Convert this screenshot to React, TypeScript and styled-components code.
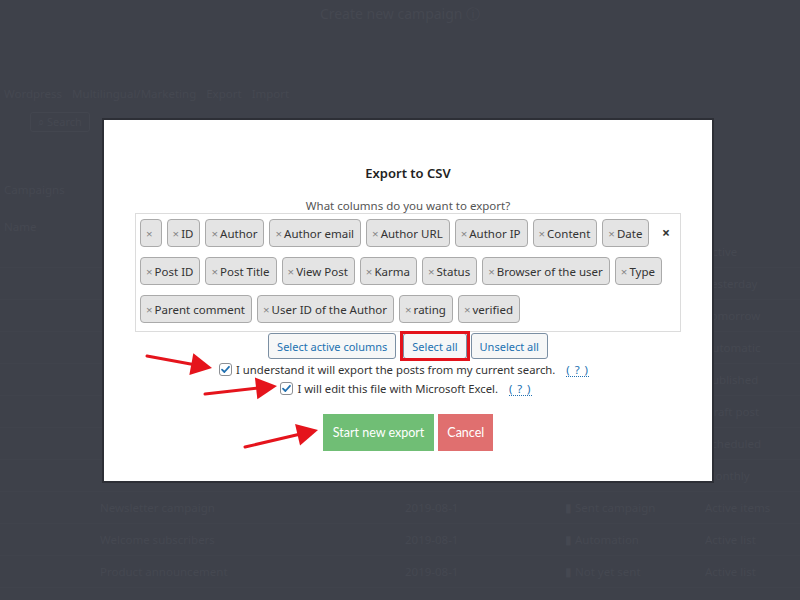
import React from 'react';
import styled, { createGlobalStyle } from 'styled-components';

const Global = createGlobalStyle`
  html, body { margin: 0; padding: 0; background: #3e414a; }
  body { width: 800px; height: 600px; overflow: hidden; font-family: "Noto Sans", "Open Sans", sans-serif; }
  * { box-sizing: border-box; }
`;

const Page = styled.div`
  position: relative;
  width: 800px;
  height: 600px;
  background: #3e414a;
  overflow: hidden;
`;

/* ---------- faint page behind the overlay ---------- */
const Backdrop = styled.div`
  display: flex;
  flex-direction: column;
  color: #454851;
  font-size: 11.5px;
`;

const BgTitle = styled.div`
  height: 86px;
  padding-top: 4px;
  text-align: center;
  font-size: 14px;
`;

const BgCrumb = styled.div`
  height: 26px;
  padding-left: 4px;
  display: flex;
  gap: 10px;
`;

const BgSearch = styled.div`
  margin-left: 30px;
  width: 60px;
  height: 20px;
  border: 1px solid #43464f;
  border-radius: 3px;
  font-size: 11px;
  line-height: 18px;
  text-align: center;
`;

const BgSide = styled.div`
  padding: 50px 0 0 4px;
  height: 104px;
  display: flex;
  flex-direction: column;
  gap: 22px;
`;

const BgRow = styled.div`
  height: 32px;
  display: grid;
  grid-template-columns: 100px 305px 160px 140px 1fr;
  align-items: center;
  border-bottom: 1px solid #40434c;
`;

const BgCell = styled.div`
  white-space: nowrap;
  overflow: hidden;
  display: flex;
  align-items: center;
  gap: 8px;
`;

/* ---------- modal ---------- */
const Modal = styled.div`
  position: absolute;
  left: 104px;
  top: 120px;
  width: 608px;
  height: 361px;
  background: #ffffff;
  box-shadow: 0 0 0 2px #2d2f36;
  display: flex;
  flex-direction: column;
  align-items: center;
  padding-top: 44px;
  color: #333;
`;

const Title = styled.h2`
  margin: 0 0 17px;
  font-size: 13px;
  line-height: 18px;
  font-weight: 600;
  color: #222;
`;

const Subtitle = styled.div`
  font-size: 11.5px;
  line-height: 14px;
  color: #555;
`;

const TagBox = styled.div`
  width: 546px;
  height: 119px;
  border: 1px solid #dcdcdc;
  display: flex;
  padding: 5px 0 8px 4px;
`;

const TagList = styled.div`
  flex: 1;
  display: flex;
  flex-wrap: wrap;
  align-content: flex-start;
  column-gap: 5px;
  row-gap: 10px;
`;

const Tag = styled.div`
  height: 28px;
  display: flex;
  align-items: center;
  padding: 0 6px 0 5px;
  background: #e4e4e4;
  border: 1px solid #aaaaaa;
  border-radius: 4px;
  font-size: 11.5px;
  color: #333;
  white-space: nowrap;
`;

const TagX = styled.span`
  color: #888;
  font-size: 11.5px;
  margin-right: 2px;
`;

const ClearAll = styled.div`
  width: 18px;
  padding-top: 4px;
  font-size: 14px;
  font-weight: 700;
  color: #333;
  text-align: left;
`;

const ButtonRow = styled.div`
  display: flex;
  gap: 4px;
  margin-top: 1px;
`;

const SmallButton = styled.button<{ $highlight?: boolean }>`
  position: relative;
  height: 26px;
  padding: 0 8px;
  margin-left: ${(p) => (p.$highlight ? 3 : 0)}px;
  background: #f6f7f7;
  border: 1px solid #7b8fa3;
  border-radius: 3px;
  color: #2271b1;
  font-family: "Noto Sans", "Open Sans", sans-serif;
  font-size: 11px;
  cursor: pointer;
  &::after {
    content: '';
    display: ${(p) => (p.$highlight ? 'block' : 'none')};
    position: absolute;
    left: -4px;
    right: -4px;
    top: -3px;
    bottom: -3px;
    border: 3px solid #e3131b;
  }
`;

const Checks = styled.div`
  margin-top: 2px;
  display: flex;
  flex-direction: column;
  align-items: center;
  gap: 2px;
`;

const CheckLine = styled.label<{ $shift: number }>`
  display: flex;
  align-items: center;
  height: 17px;
  font-size: 11.3px;
  color: #333;
  margin-left: ${(p) => p.$shift}px;
`;

const Box = styled.span`
  width: 13px;
  height: 13px;
  border: 1px solid #8c8f94;
  border-radius: 3px;
  background: #fff;
  display: inline-flex;
  align-items: center;
  justify-content: center;
  margin-right: 4px;
`;

const Help = styled.span`
  margin-left: 11px;
  color: #2271b1;
  border-bottom: 1px dotted #2271b1;
  line-height: 13px;
  letter-spacing: 1px;
`;

const Actions = styled.div`
  margin-top: 17px;
  display: flex;
  gap: 4px;
`;

const ActionButton = styled.button<{ $tone: 'go' | 'stop' }>`
  height: 37px;
  padding: 0 ${(p) => (p.$tone === 'go' ? 10 : 9)}px;
  border: none;
  border-radius: 0;
  background: ${(p) => (p.$tone === 'go' ? '#70be75' : '#e06f6f')};
  color: #fff;
  font-family: Lato, "Noto Sans", sans-serif;
  font-size: 12.5px;
  cursor: pointer;
`;

const Annotations = styled.svg`
  position: absolute;
  left: 0;
  top: 0;
  pointer-events: none;
`;

function Arrow({ x1, y1, x2, y2 }: { x1: number; y1: number; x2: number; y2: number }) {
  const dx = x2 - x1;
  const dy = y2 - y1;
  const len = Math.hypot(dx, dy);
  const ux = dx / len;
  const uy = dy / len;
  const hl = 21;
  const hw = 11;
  const bx = x2 - ux * hl;
  const by = y2 - uy * hl;
  const pts = `${x2},${y2} ${bx - uy * hw},${by + ux * hw} ${bx + uy * hw},${by - ux * hw}`;
  return (
    <g>
      <line x1={x1} y1={y1} x2={bx + ux * 2} y2={by + uy * 2} stroke="#e5141c" strokeWidth={3} strokeLinecap="round" />
      <polygon points={pts} fill="#e5141c" />
    </g>
  );
}

const Check = () => (
  <svg width="11" height="11" viewBox="0 0 11 11">
    <path d="M2 5.6 L4.4 8 L9 2.8" fill="none" stroke="#2271b1" strokeWidth="1.8" strokeLinecap="round" strokeLinejoin="round" />
  </svg>
);

const tags = [
  '', 'ID', 'Author', 'Author email', 'Author URL', 'Author IP', 'Content', 'Date',
  'Post ID', 'Post Title', 'View Post', 'Karma', 'Status', 'Browser of the user', 'Type',
  'Parent comment', 'User ID of the Author', 'rating', 'verified',
];

const bgRows = [
  ['', '', '', '', 'Active'],
  ['', '', '', '', 'Yesterday'],
  ['', '', '', '', 'Tomorrow'],
  ['', '', '', '', 'Automatic'],
  ['', '', '', '', 'Published'],
  ['', '', '', '', 'Draft post'],
  ['', '', '', '', 'Scheduled'],
  ['', '', '', '', 'Monthly'],
  ['', 'Newsletter campaign', '2019-08-1', '▮ Sent campaign', 'Active items'],
  ['', 'Welcome subscribers', '2019-08-1', '▮ Automation', 'Active list'],
  ['', 'Product announcement', '2019-08-1', '▮ Not yet sent', 'Active list'],
];

export default function App() {
  return (
    <Page>
      <Global />
      <Backdrop>
        <BgTitle>Create new campaign ⓘ</BgTitle>
        <BgCrumb>
          <span>Wordpress</span>
          <span>Multilingual/Marketing</span>
          <span>Export</span>
          <span>Import</span>
        </BgCrumb>
        <BgSearch>⌕ Search</BgSearch>
        <BgSide>
          <span>Campaigns</span>
          <span>Name</span>
        </BgSide>
        {bgRows.map((r, i) => (
          <BgRow key={i}>
            {r.map((c, j) => (
              <BgCell key={j}>{c}</BgCell>
            ))}
          </BgRow>
        ))}
      </Backdrop>

      <Modal>
        <Title>Export to CSV</Title>
        <Subtitle>What columns do you want to export?</Subtitle>
        <TagBox>
          <TagList>
            {tags.map((t, i) => (
              <Tag key={i}>
                <TagX>×</TagX>
                {t}
              </Tag>
            ))}
          </TagList>
          <ClearAll>×</ClearAll>
        </TagBox>
        <ButtonRow>
          <SmallButton>Select active columns</SmallButton>
          <SmallButton $highlight>Select all</SmallButton>
          <SmallButton>Unselect all</SmallButton>
        </ButtonRow>
        <Checks>
          <CheckLine $shift={-8}>
            <Box><Check /></Box>
            I understand it will export the posts from my current search.
            <Help>( ? )</Help>
          </CheckLine>
          <CheckLine $shift={-4}>
            <Box><Check /></Box>
            I will edit this file with Microsoft Excel.
            <Help>( ? )</Help>
          </CheckLine>
        </Checks>
        <Actions>
          <ActionButton $tone="go">Start new export</ActionButton>
          <ActionButton $tone="stop">Cancel</ActionButton>
        </Actions>
      </Modal>

      <Annotations width="800" height="600" viewBox="0 0 800 600">
        <Arrow x1={147} y1={356} x2={212} y2={368} />
        <Arrow x1={205} y1={394} x2={277} y2={386} />
        <Arrow x1={245} y1={447} x2={318} y2={430} />
      </Annotations>
    </Page>
  );
}
